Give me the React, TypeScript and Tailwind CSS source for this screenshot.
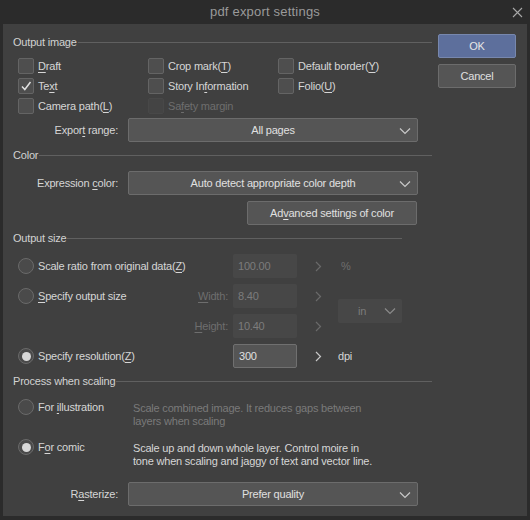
import React from 'react';

const FONT = { fontFamily: '"Liberation Sans", Arial, sans-serif' };

function U({ text, at }: { text: string; at: number }) {
  return (
    <>
      {text.slice(0, at)}
      <span className="underline underline-offset-2">{text.slice(at, at + 1)}</span>
      {text.slice(at + 1)}
    </>
  );
}

function Chevron({ className = '', color = '#c8c8c8' }: { className?: string; color?: string }) {
  return (
    <svg width="12" height="8" viewBox="0 0 12 8" className={className}>
      <path d="M1 1.5 L6 6.5 L11 1.5" fill="none" stroke={color} strokeWidth="1.2" />
    </svg>
  );
}

function Arrow({ dim }: { dim?: boolean }) {
  return (
    <svg width="7" height="11" viewBox="0 0 7 11">
      <path d="M1 1 L5.5 5.5 L1 10" fill="none" stroke={dim ? '#6a6a6a' : '#c8c8c8'} strokeWidth="1.2" />
    </svg>
  );
}

function Header({ title, width = 419 }: { title: string; width?: number }) {
  return (
    <div className="flex items-center h-[14px] ml-[10px]" style={{ width }}>
      <span className="text-[#d2d2d2] leading-none pr-[1px]">{title}</span>
      <div className="flex-1 h-px bg-[#606060]" />
    </div>
  );
}

function Check({ label, checked, disabled }: { label: React.ReactNode; checked?: boolean; disabled?: boolean }) {
  return (
    <div className="flex items-center h-[20px] w-[130px]">
      <div
        className={`w-[16px] h-[16px] rounded-[2px] border flex items-center justify-center ${
          disabled ? 'bg-[#444444] border-[#484848]' : 'bg-[#4e4e4e] border-[#646464]'
        }`}
      >
        {checked && (
          <svg width="12" height="12" viewBox="0 0 12 12">
            <path d="M2 6.5 L4.8 9.5 L10.5 2" fill="none" stroke="#e0e0e0" strokeWidth="1.5" />
          </svg>
        )}
      </div>
      <span className={`ml-[4px] ${disabled ? 'text-[#6e6e6e]' : 'text-[#d6d6d6]'}`}>{label}</span>
    </div>
  );
}

function Radio({ label, on }: { label: React.ReactNode; on?: boolean }) {
  return (
    <div className="flex items-center">
      <div className="w-[16px] h-[16px] rounded-full border border-[#6a6a6a] bg-[#4a4a4a] flex items-center justify-center">
        {on && <div className="w-[9px] h-[9px] rounded-full bg-[#d8d8d8]" />}
      </div>
      <span className="ml-[4px] text-[#d6d6d6]">{label}</span>
    </div>
  );
}

function Select({ value }: { value: string }) {
  return (
    <div className="w-[290px] h-[24px] rounded-[2px] border border-[#6c6c6c] bg-[#555555] flex items-center relative">
      <span className="flex-1 text-center text-[#e0e0e0]">{value}</span>
      <Chevron className="absolute right-[6px] top-[8px]" />
    </div>
  );
}

function LabelCell({ children }: { children: React.ReactNode }) {
  return <div className="w-[125px] text-right pr-[10px] text-[#d6d6d6]">{children}</div>;
}

function NumBox({ value, active }: { value: string; active?: boolean }) {
  return (
    <div
      className={`w-[64px] h-[24px] rounded-[2px] flex items-center pl-[5px] ${
        active ? 'bg-[#555555] border border-[#707070] text-[#e0e0e0]' : 'bg-[#474747] text-[#7c7c7c]'
      }`}
    >
      {value}
    </div>
  );
}

function SizeRow({ left, value, active, dim = true }: { left: React.ReactNode; value: string; active?: boolean; dim?: boolean }) {
  return (
    <div className="h-[24px] flex items-center">
      <div className="w-[230px] flex items-center">{left}</div>
      <NumBox value={value} active={active} />
      <div className="ml-[18px] flex items-center">
        <Arrow dim={dim} />
      </div>
    </div>
  );
}

export default function App() {
  return (
    <div className="w-[530px] h-[520px] bg-[#2b2b2b] flex flex-col text-[11px] tracking-[-0.2px]" style={FONT}>
      <div className="h-[24px] flex items-center justify-center relative">
        <span className="text-[#9a9a9a] text-[13px] tracking-[0.2px]">pdf export settings</span>
        <svg width="11" height="11" viewBox="0 0 11 11" className="absolute right-[7px] top-[7px]">
          <path d="M1 1 L10 10 M10 1 L1 10" stroke="#a8a8a8" strokeWidth="1.1" />
        </svg>
      </div>
      <div className="mx-[3px] h-[492px] bg-[#404040] flex">
        <div className="w-[430px] flex flex-col pt-[11px]">
          <Header title="Output image" />
          <div className="flex flex-col pl-[15px] mt-[7px]">
            <div className="flex">
              <Check label={<U text="Draft" at={0} />} />
              <Check label={<U text="Crop mark(T)" at={10} />} />
              <Check label={<U text="Default border(Y)" at={15} />} />
            </div>
            <div className="flex">
              <Check label={<U text="Text" at={2} />} checked />
              <Check label={<U text="Story Information" at={8} />} />
              <Check label={<U text="Folio(U)" at={6} />} />
            </div>
            <div className="flex">
              <Check label={<U text="Camera path(L)" at={12} />} />
              <Check label={<U text="Safety margin" at={2} />} disabled />
            </div>
          </div>
          <div className="flex items-center mt-[2px]">
            <LabelCell>
              <U text="Export range:" at={5} />
            </LabelCell>
            <Select value="All pages" />
          </div>

          <div className="mt-[6px]">
            <Header title="Color" />
          </div>
          <div className="flex items-center mt-[9px]">
            <LabelCell>
              <U text="Expression color:" at={11} />
            </LabelCell>
            <Select value="Auto detect appropriate color depth" />
          </div>
          <div className="flex justify-end pr-[16px] mt-[6px]">
            <div className="w-[170px] h-[24px] rounded-[2px] border border-[#6c6c6c] bg-[#555555] flex items-center justify-center text-[#e0e0e0]">
              <U text="Advanced settings of color" at={2} />
            </div>
          </div>

          <div className="mt-[6px]">
            <Header title="Output size" width={389} />
          </div>
          <div className="flex flex-col mt-[9px] gap-[6px]">
            <div className="flex items-center">
              <SizeRow left={<div className="pl-[15px]"><Radio label={<U text="Scale ratio from original data(Z)" at={31} />} /></div>} value="100.00" />
              <span className="ml-[19px] text-[#6e6e6e]">%</span>
            </div>
            <div className="flex">
              <div className="flex flex-col gap-[6px]">
                <SizeRow
                  left={
                    <div className="w-full flex items-center justify-between pl-[15px] pr-[5px]">
                      <Radio label={<U text="Specify output size" at={0} />} />
                      <span className="text-[#6e6e6e]"><U text="Width:" at={0} /></span>
                    </div>
                  }
                  value="8.40"
                />
                <SizeRow
                  left={<div className="w-full text-right pr-[5px] text-[#6e6e6e]"><U text="Height:" at={0} /></div>}
                  value="10.40"
                />
              </div>
              <div className="ml-[16px] mt-[15px] w-[64px] h-[24px] rounded-[2px] bg-[#474747] flex items-center relative">
                <span className="text-[#7c7c7c] ml-[20px]">in</span>
                <Chevron className="absolute right-[6px] top-[8px]" color="#8a8a8a" />
              </div>
            </div>
            <div className="flex items-center">
              <SizeRow left={<div className="pl-[15px]"><Radio label={<U text="Specify resolution(Z)" at={19} />} on /></div>} value="300" active dim={false} />
              <span className="ml-[16px] text-[#d6d6d6]">dpi</span>
            </div>
          </div>

          <div className="mt-[6px]">
            <Header title="Process when scaling" />
          </div>
          <div className="flex mt-[10px] pl-[15px]">
            <div className="w-[115px] pt-[1px]">
              <Radio label={<U text="For illustration" at={4} />} />
            </div>
            <div className="text-[#7a7a7a] leading-[13px] pt-[4px]">
              Scale combined image. It reduces gaps between
              <br />
              layers when scaling
            </div>
          </div>
          <div className="flex mt-[10px] pl-[15px]">
            <div className="w-[115px] pt-[1px]">
              <Radio label={<U text="For comic" at={1} />} on />
            </div>
            <div className="text-[#d6d6d6] leading-[13px] pt-[4px]">
              Scale up and down whole layer. Control moire in
              <br />
              tone when scaling and jaggy of text and vector line.
            </div>
          </div>
          <div className="flex items-center mt-[14px]">
            <LabelCell>
              <U text="Rasterize:" at={1} />
            </LabelCell>
            <Select value="Prefer quality" />
          </div>
        </div>
        <div className="flex flex-col pt-[10px] pl-[5px] gap-[6px]">
          <div className="w-[78px] h-[24px] rounded-[2px] border border-[#7787ad] bg-[#5d6f9c] flex items-center justify-center text-[#e6e6e6]">
            OK
          </div>
          <div className="w-[78px] h-[24px] rounded-[2px] border border-[#6c6c6c] bg-[#555555] flex items-center justify-center text-[#e0e0e0]">
            Cancel
          </div>
        </div>
      </div>
    </div>
  );
}
